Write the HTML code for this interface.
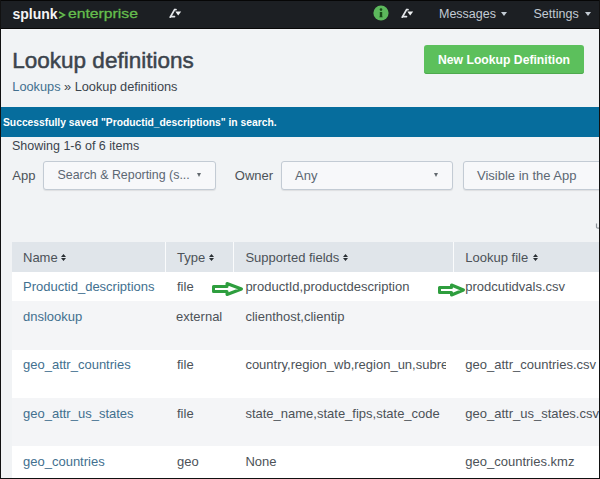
<!DOCTYPE html>
<html><head><meta charset="utf-8">
<style>
*{margin:0;padding:0;box-sizing:border-box}
html,body{width:600px;height:479px;overflow:hidden}
body{position:relative;background:#f1f3f5;font-family:"Liberation Sans",sans-serif;color:#3c444d}
.a{position:absolute;white-space:nowrap;line-height:1}
#nav{position:absolute;left:0;top:0;width:600px;height:29px;background:#1c1f23;border-top:1px solid #060606;border-bottom:1px solid #080808}
.navt{color:#c3cbd4;font-size:12.5px}
.caret{position:absolute;width:0;height:0;border-left:3px solid transparent;border-right:3px solid transparent;border-top:4px solid #c3cbd4}
#btn{position:absolute;left:424px;top:45px;width:160px;height:29px;background:#5cc05c;border-radius:3px;box-shadow:inset 0 -1px 0 #4ea94e}
#msg{position:absolute;left:0;top:107px;width:600px;height:29.6px;background:#066d9d}
.sel{position:absolute;top:161px;height:28.5px;background:#f7f8fa;border:1px solid #c3cbd4;border-radius:3px;box-shadow:0 1px 1px rgba(0,0,0,0.08)}
.scaret{position:absolute;width:0;height:0;border-left:2.6px solid transparent;border-right:2.6px solid transparent;border-top:4px solid #62686e}
.t13{font-size:13px;color:#4c5258}
.t13.lnk,.lnk{color:#42708f}
.row{position:absolute;left:12px;width:587px}
.sep{position:absolute;top:242px;height:30px;width:1px;background:#fafbfc}
.sort{position:absolute;width:5px;height:7px}
#bl{position:absolute;left:0;top:0;width:1px;height:479px;background:#111}
#br{position:absolute;left:599px;top:0;width:1px;height:479px;background:#111}
#bb{position:absolute;left:0;top:478px;width:600px;height:1px;background:#111}
</style></head><body>
<div id="nav"></div>
<div class="a" style="left:12.5px;top:6.7px;font-size:14px;font-weight:bold;color:#f4f4f4">splunk</div>
<svg class="a" style="left:58px;top:11px" width="8" height="8" viewBox="0 0 8 8"><path d="M1 1 L6.5 4 L1 7" stroke="#65bd4d" stroke-width="1.6" fill="none"/></svg>
<div class="a" style="left:67.5px;top:6.8px;font-size:13.5px;color:#65bd4d;-webkit-text-stroke:0.3px #65bd4d;transform-origin:0 0;transform:scaleX(1.165)">enterprise</div>
<!-- activity icon -->
<svg class="a" style="left:160px;top:2px" width="30" height="24" viewBox="0 0 30 24"><path d="M10.2 15.2 L14.6 7.6 L16 7.6 M11 14.6 L14.5 14.6" stroke="#e4e7ea" stroke-width="1.7" fill="none" stroke-linecap="round"/><path d="M15.3 9.6 L21.2 9.6 L18.2 13.6 Z" fill="#f0f2f4"/></svg>
<!-- green info circle -->
<svg class="a" style="left:373px;top:4.8px" width="16" height="16" viewBox="0 0 16 16"><circle cx="8" cy="8" r="7.6" fill="#5cb85c"/><path d="M6.8 7 L9.2 7 L9.2 11.3 L9.8 12.3 L6.2 12.3 L6.8 11.3 Z" fill="#174a17"/><circle cx="8" cy="4.6" r="1.3" fill="#174a17"/></svg>
<svg class="a" style="left:392px;top:2px" width="30" height="24" viewBox="0 0 30 24"><path d="M10.2 15.2 L14.6 7.6 L16 7.6 M11 14.6 L14.5 14.6" stroke="#e4e7ea" stroke-width="1.7" fill="none" stroke-linecap="round"/><path d="M15.3 9.6 L21.2 9.6 L18.2 13.6 Z" fill="#f0f2f4"/></svg>
<div class="a navt" style="left:439px;top:7.7px">Messages</div>
<div class="caret" style="left:501px;top:12px"></div>
<div class="a navt" style="left:533.5px;top:7.7px">Settings</div>
<div class="caret" style="left:585px;top:12px"></div>

<div class="a" style="left:12.3px;top:49.6px;font-size:22.5px;-webkit-text-stroke:0.5px #3c444d">Lookup definitions</div>
<div class="a" style="left:12.3px;top:80.9px;font-size:12.75px"><span class="lnk">Lookups</span> » Lookup definitions</div>
<div id="btn"></div>
<div class="a" style="left:438px;top:53.7px;font-size:12.2px;font-weight:bold;color:#fff">New Lookup Definition</div>

<div id="msg"></div>
<div class="a" style="left:3px;top:117.5px;font-size:10.3px;font-weight:bold;color:#fff">Successfully saved "Productid_descriptions" in search.</div>

<div class="a" style="left:12px;top:140.3px;font-size:12.5px">Showing 1-6 of 6 items</div>

<div class="a t13" style="left:12.3px;top:169px">App</div>
<div class="sel" style="left:43px;width:173px"></div>
<div class="a t13" style="left:57.5px;top:169px;color:#5c6773;font-size:12.4px">Search &amp; Reporting (s...</div>
<div class="scaret" style="left:197.4px;top:173px"></div>
<div class="a t13" style="left:234.8px;top:169px">Owner</div>
<div class="sel" style="left:281px;width:172px"></div>
<div class="a t13" style="left:295px;top:169px;color:#5c6773">Any</div>
<div class="scaret" style="left:434.4px;top:173px"></div>
<div class="sel" style="left:462.5px;width:160px"></div>
<div class="a t13" style="left:477px;top:169px;color:#5c6773">Visible in the App</div>
<svg class="a" style="left:594px;top:222px" width="5" height="8" viewBox="0 0 5 8"><path d="M2.5 1.5 L2.5 5 Q2.5 6.2 4 6.2 L5 6.2" stroke="#8f959b" stroke-width="1.2" fill="none"/></svg>

<!-- table -->
<div class="row" style="top:242px;height:30px;background:#e0e5ea"></div>
<div class="sep" style="left:165px"></div>
<div class="sep" style="left:233px"></div>
<div class="sep" style="left:453px"></div>
<div class="row" style="top:272px;height:29px;background:#fff"></div>
<div class="row" style="top:301px;height:49px;background:#f4f5f7"></div>
<div class="row" style="top:350px;height:48px;background:#fff"></div>
<div class="row" style="top:398px;height:48px;background:#f4f5f7"></div>
<div class="row" style="top:446px;height:33px;background:#fff"></div>

<div class="a t13" style="left:23px;top:251px">Name</div>
<div class="a t13" style="left:177px;top:251px">Type</div>
<div class="a t13" style="left:245.4px;top:251px">Supported fields</div>
<div class="a t13" style="left:465.3px;top:251px">Lookup file</div>
<svg class="sort" style="left:60.5px;top:253.5px" viewBox="0 0 5 7"><path d="M0 3 L2.5 0 L5 3Z M0 4 L2.5 7 L5 4Z" fill="#2a2f34"/></svg>
<svg class="sort" style="left:209.2px;top:253.5px" viewBox="0 0 5 7"><path d="M0 3 L2.5 0 L5 3Z M0 4 L2.5 7 L5 4Z" fill="#2a2f34"/></svg>
<svg class="sort" style="left:343px;top:253.5px" viewBox="0 0 5 7"><path d="M0 3 L2.5 0 L5 3Z M0 4 L2.5 7 L5 4Z" fill="#2a2f34"/></svg>
<svg class="sort" style="left:532.5px;top:253.5px" viewBox="0 0 5 7"><path d="M0 3 L2.5 0 L5 3Z M0 4 L2.5 7 L5 4Z" fill="#2a2f34"/></svg>

<div class="a t13 lnk" style="left:23px;top:280.25px">Productid_descriptions</div>
<div class="a t13" style="left:177px;top:280.25px">file</div>
<div class="a t13" style="left:245.4px;top:280.25px">productId,productdescription</div>
<div class="a t13" style="left:465.3px;top:280.25px">prodcutidvals.csv</div>

<div class="a t13 lnk" style="left:23px;top:309.8px">dnslookup</div>
<div class="a t13" style="left:176px;top:309.8px">external</div>
<div class="a t13" style="left:245.4px;top:309.8px">clienthost,clientip</div>

<div class="a t13 lnk" style="left:23px;top:357.8px">geo_attr_countries</div>
<div class="a t13" style="left:177px;top:357.8px">file</div>
<div class="a t13" style="left:245.4px;top:357.8px;width:201px;height:16px;overflow:hidden">country,region_wb,region_un,subregion</div>
<div class="a t13" style="left:465.3px;top:357.8px">geo_attr_countries.csv</div>

<div class="a t13 lnk" style="left:23px;top:406.8px">geo_attr_us_states</div>
<div class="a t13" style="left:177px;top:406.8px">file</div>
<div class="a t13" style="left:245.4px;top:406.8px">state_name,state_fips,state_code</div>
<div class="a t13" style="left:465.3px;top:406.8px">geo_attr_us_states.csv</div>

<div class="a t13 lnk" style="left:23px;top:455.2px">geo_countries</div>
<div class="a t13" style="left:177px;top:455.2px">geo</div>
<div class="a t13" style="left:245.4px;top:455.2px">None</div>
<div class="a t13" style="left:465.3px;top:455.2px">geo_countries.kmz</div>

<!-- green arrows -->
<svg class="a" style="left:200px;top:275px" width="60" height="30" viewBox="0 0 60 30"><path d="M13.5 11.5 L27 11.5 L27 8.5 L41.5 14 L27 19.5 L27 16.5 L13.5 16.5 Z" fill="none" stroke="#2e9e3e" stroke-width="3" stroke-linejoin="round"/></svg>
<svg class="a" style="left:430px;top:276px" width="40" height="30" viewBox="0 0 40 30"><path d="M9.5 11.5 L21.5 11.5 L21.5 9 L33.5 14 L21.5 19 L21.5 16.5 L9.5 16.5 Z" fill="none" stroke="#2e9e3e" stroke-width="3" stroke-linejoin="round"/></svg>
<div id="bl"></div><div id="br"></div><div id="bb"></div>
</body></html>
